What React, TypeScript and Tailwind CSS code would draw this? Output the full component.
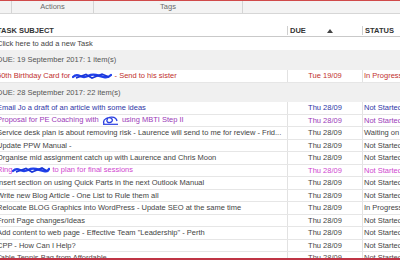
import type { ReactNode } from 'react';

// blue marker scribbles that hide names in the task subjects
const Scribble = ({ kind }: { kind: 'long' | 'loop' | 'mid' }) => {
  if (kind === 'loop') {
    return (
      <svg width="17" height="9" viewBox="0 0 17 9" className="inline-block align-middle mx-[1px]">
        <path d="M2 8 C0 3 7 0 10 3 C12 7 4 8 5 4 C6 0 14 0 15 5" fill="none" stroke="#2a3fe0" strokeWidth="1.3" />
        <path d="M1 8.3 L16 8.3" stroke="#2a3fe0" strokeWidth="1.2" />
      </svg>
    );
  }
  const w = kind === 'long' ? 40 : 38;
  return (
    <svg width={w} height="8" viewBox={`0 0 ${w} 8`} className="inline-block align-middle">
      <path
        d={`M1 5 Q4 2 8 4 T16 4 T24 3 T32 5 T${w - 1} 3`}
        fill="none"
        stroke="#2140ea"
        strokeWidth="2.4"
        strokeLinecap="round"
      />
      <path d={`M4 6 L14 2.5 L20 6 L30 2 L${w - 3} 5`} fill="none" stroke="#1a36d8" strokeWidth="1.6" />
    </svg>
  );
};

type Task = { subject: ReactNode; due: string; status: string; tone: string };

const tasks: Task[] = [
  { subject: 'Email Jo a draft of an article with some ideas', due: 'Thu 28/09', status: 'Not Started', tone: 'text-[#2e35a6]' },
  {
    subject: (
      <>
        Proposal for PE Coaching with <Scribble kind="loop" /> using MBTI Step II
      </>
    ),
    due: 'Thu 28/09',
    status: 'Not Started',
    tone: 'text-[#9b3ab8]',
  },
  {
    subject: 'Service desk plan is about removing risk -  Laurence will send to me for review - Frid...',
    due: 'Thu 28/09',
    status: 'Waiting on someone else',
    tone: 'text-[#444]',
  },
  { subject: 'Update PPW Manual -', due: 'Thu 28/09', status: 'Not Started', tone: 'text-[#444]' },
  { subject: 'Organise mid assignment catch  up with Laurence and Chris Moon', due: 'Thu 28/09', status: 'Not Started', tone: 'text-[#444]' },
  {
    subject: (
      <>
        Ring
        <Scribble kind="mid" /> to plan for final sessions
      </>
    ),
    due: 'Thu 28/09',
    status: 'Not Started',
    tone: 'text-[#cf46cf]',
  },
  { subject: 'Insert section on using Quick Parts in the next Outlook Manual', due: 'Thu 28/09', status: 'Not Started', tone: 'text-[#444]' },
  { subject: 'Write new Blog Article - One List to Rule them all', due: 'Thu 28/09', status: 'Not Started', tone: 'text-[#444]' },
  { subject: 'Relocate BLOG Graphics into WordPress - Update SEO at the same time', due: 'Thu 28/09', status: 'In Progress', tone: 'text-[#444]' },
  { subject: 'Front Page changes/Ideas', due: 'Thu 28/09', status: 'Not Started', tone: 'text-[#444]' },
  { subject: 'Add content to web page -  Effective Team "Leadership" - Perth', due: 'Thu 28/09', status: 'Not Started', tone: 'text-[#444]' },
  { subject: 'CPP - How Can I Help?', due: 'Thu 28/09', status: 'Not Started', tone: 'text-[#444]' },
  { subject: 'Table Tennis Bag from Affordable', due: 'Thu 28/09', status: 'Not Started', tone: 'text-[#5a4448]' },
];

const TaskRow = ({ task, h = 'h-[12.5px]' }: { task: Task; h?: string }) => (
  <div className={`grid grid-cols-[287px_75px_1fr] ${h} shrink-0 border-b border-[#e6e6e6] ${task.tone}`}>
    <div className="flex items-center overflow-hidden whitespace-nowrap">
      <span className="-ml-[3px]">{task.subject}</span>
    </div>
    <div className="flex items-center justify-center border-l border-[#e2e2e2]">{task.due}</div>
    <div className="flex items-center overflow-hidden whitespace-nowrap border-l border-[#e2e2e2] pl-[1px]">{task.status}</div>
  </div>
);

const GroupHeader = ({ label, h }: { label: string; h: string }) => (
  <div className={`flex items-center ${h} shrink-0 bg-[#f0f0f0] text-[#555] whitespace-nowrap overflow-hidden`}>
    <span className="-ml-[3px]">{label}</span>
  </div>
);

export default function App() {
  return (
    <div className="w-[400px] h-[260px] overflow-hidden bg-white flex flex-col font-['Liberation_Sans',Arial,sans-serif] text-[7.5px] leading-none">
      {/* ribbon group labels */}
      <div className="flex h-[14px] shrink-0 border-t border-[#d04a4a] border-b border-b-[#d6d6d6] bg-[#f3f3f3] text-[#6a6a6a]">
        <div className="w-[12px] border-r border-[#d4d4d4]" />
        <div className="w-[82px] flex items-center justify-center border-r border-[#d4d4d4]">Actions</div>
        <div className="w-[149px] flex items-center justify-center border-r border-[#d4d4d4]">Tags</div>
        <div className="flex-1" />
      </div>

      <div className="h-[11px] shrink-0" />

      {/* column headers */}
      <div className="grid grid-cols-[287px_75px_1fr] h-[12px] shrink-0 border-b border-[#c9c9c9] font-bold text-[#333]">
        <div className="flex items-center overflow-hidden whitespace-nowrap">
          <span className="-ml-[3px]">TASK SUBJECT</span>
        </div>
        <div className="flex items-center pl-[2px] border-l border-[#cfcfcf] my-[1px]">
          <span>DUE</span>
          <svg width="6" height="4" viewBox="0 0 6 4" className="ml-[21px]">
            <path d="M0 4 L3 0 L6 4 Z" fill="#444" />
          </svg>
        </div>
        <div className="flex items-center pl-[2px] border-l border-[#cfcfcf] my-[1px]">STATUS</div>
      </div>

      <div className="flex items-center h-[13px] shrink-0 text-[#444] whitespace-nowrap">
        <span className="-ml-[3px]">Click here to add a new Task</span>
      </div>

      <GroupHeader label="DUE: 19 September 2017: 1 item(s)" h="h-[20px]" />
      <TaskRow
        h="h-[13px]"
        task={{
          subject: (
            <>
              50th Birthday Card for <Scribble kind="long" /> - Send to his sister
            </>
          ),
          due: 'Tue 19/09',
          status: 'In Progress',
          tone: 'text-[#c1302e]',
        }}
      />
      <GroupHeader label="DUE: 28 September 2017: 22 item(s)" h="h-[19px]" />

      {tasks.slice(0, -1).map((t, i) => (
        <TaskRow key={i} task={t} />
      ))}
      <div className="h-[6px] shrink-0 overflow-hidden">
        <TaskRow task={tasks[tasks.length - 1]} />
      </div>
      <div className="h-[2px] shrink-0 bg-[#bf3445]" />
    </div>
  );
}
